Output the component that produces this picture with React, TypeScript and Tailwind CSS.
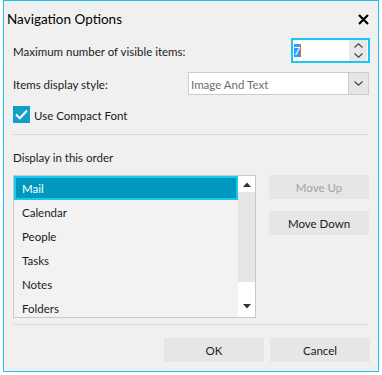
import React from "react";

const font = { fontFamily: 'Lato, "Noto Sans", sans-serif' };

function Chevron({ up }: { up?: boolean }) {
  return (
    <svg width="9" height="5" viewBox="0 0 9 5" className="block">
      <path
        d={up ? "M0.5 4.5 L4.5 0.8 L8.5 4.5" : "M0.5 0.5 L4.5 4.2 L8.5 0.5"}
        fill="none"
        stroke="#444"
        strokeWidth="1.2"
      />
    </svg>
  );
}

export default function App() {
  const items = ["Mail", "Calendar", "People", "Tasks", "Notes", "Folders"];
  return (
    <div className="w-[382px] h-[375px] bg-white pl-[3px]" style={font}>
      <div className="w-[376px] h-[372px] border border-[#1bc3ee] bg-[#f0f0f0] flex flex-col text-[11.5px] text-[#1a1a1a]">
        {/* title */}
        <div className="h-[37px] flex items-center justify-between pl-[3px] pr-[9px] shrink-0">
          <span className="text-[13.5px] text-black leading-none">Navigation Options</span>
          <svg width="11" height="11" viewBox="0 0 11 11">
            <path d="M1 1 L10 10 M10 1 L1 10" stroke="#000" strokeWidth="2.2" />
          </svg>
        </div>
        <div className="pl-[9px] pr-[8px] flex flex-col">
          {/* row1 */}
          <div className="h-[25px] flex items-center justify-between">
            <span className="translate-y-[1px]">Maximum number of visible items:</span>
            <div className="w-[79px] h-[25px] border-2 border-[#1bc8f2] bg-white flex items-center">
              <div className="ml-[1px] flex items-center h-[13px]">
                <span className="bg-[#3399ff] text-white h-[13px] w-[6px] text-[12px] leading-[13px] flex justify-center">7</span>
                <span className="w-px h-[13px] bg-[#e07010]"></span>
              </div>
              <div className="ml-auto mr-[1px] w-[18px] h-[21px] bg-[#e8e8e8] flex flex-col items-center justify-center gap-[5px]">
                <Chevron up />
                <Chevron />
              </div>
            </div>
          </div>
          {/* row2 */}
          <div className="mt-[9px] h-[23px] flex items-center justify-between">
            <span className="translate-y-[1px]">Items display style:</span>
            <div className="w-[181px] mr-[1px] h-[23px] border border-[#cccccc] bg-white flex items-center">
              <span className="pl-[2px] text-[#6d6d6d] translate-y-[1px]">Image And Text</span>
              <div className="ml-auto w-[20px] h-full bg-[#e6e6e6] border-l border-[#cccccc] flex items-center justify-center">
                <Chevron />
              </div>
            </div>
          </div>
          {/* checkbox */}
          <div className="mt-[11px] h-[17px] flex items-center gap-[4px]">
            <div className="w-[17px] h-[17px] bg-[#0f9fc7] flex items-center justify-center">
              <svg width="13" height="11" viewBox="0 0 13 11">
                <path d="M1 5.5 L4.8 9.2 L12 1.5" fill="none" stroke="#fff" strokeWidth="2" />
              </svg>
            </div>
            <span className="translate-y-[1px]">Use Compact Font</span>
          </div>
          <div className="mt-[11px] h-px bg-[#d7d7d7] mr-[1px]"></div>
          <div className="mt-[14px] h-[16px] flex items-center translate-y-[1px]">Display in this order</div>
          {/* list + buttons */}
          <div className="mt-[10px] flex">
            <div className="w-[243px] h-[143px] border border-[#c8c8c8] bg-[#f2f2f2] flex overflow-hidden">
              <div className="w-[224px] flex flex-col">
                {items.map((it, i) =>
                  i === 0 ? (
                    <div
                      key={it}
                      className="h-[24px] shrink-0 bg-[#0099bd] border-2 border-[#1bc8f2] text-white flex items-center pl-[6px] pt-[1px]"
                    >
                      {it}
                    </div>
                  ) : (
                    <div key={it} className="h-[24px] shrink-0 flex items-center pl-[8px] pt-[1px]">
                      {it}
                    </div>
                  )
                )}
              </div>
              <div className="w-[17px] flex flex-col bg-white">
                <div className="h-[16px] flex items-center justify-center">
                  <svg width="8" height="5" viewBox="0 0 8 5">
                    <path d="M0 5 L4 0.5 L8 5 Z" fill="#333" />
                  </svg>
                </div>
                <div className="h-[90px] bg-[#e6e6e6]"></div>
                <div className="flex-1 flex items-end justify-center pb-[8px]">
                  <svg width="8" height="5" viewBox="0 0 8 5">
                    <path d="M0 0 L8 0 L4 4.5 Z" fill="#333" />
                  </svg>
                </div>
              </div>
            </div>
            <div className="ml-[13px] flex flex-col gap-[12px]">
              <div className="w-[100px] h-[24px] bg-[#e6e6e6] flex items-center justify-center text-[#a3a3a3] pt-[1px]">Move Up</div>
              <div className="w-[100px] h-[24px] bg-[#e6e6e6] flex items-center justify-center pt-[1px]">Move Down</div>
            </div>
          </div>
          <div className="mt-[6px] h-px bg-[#d7d7d7] mr-[1px]"></div>
          <div className="mt-[13px] flex justify-end gap-[6px]">
            <div className="w-[100px] h-[24px] bg-[#e6e6e6] flex items-center justify-center pt-[1px]">OK</div>
            <div className="w-[100px] h-[24px] bg-[#e6e6e6] flex items-center justify-center pt-[1px]">Cancel</div>
          </div>
        </div>
      </div>
    </div>
  );
}
